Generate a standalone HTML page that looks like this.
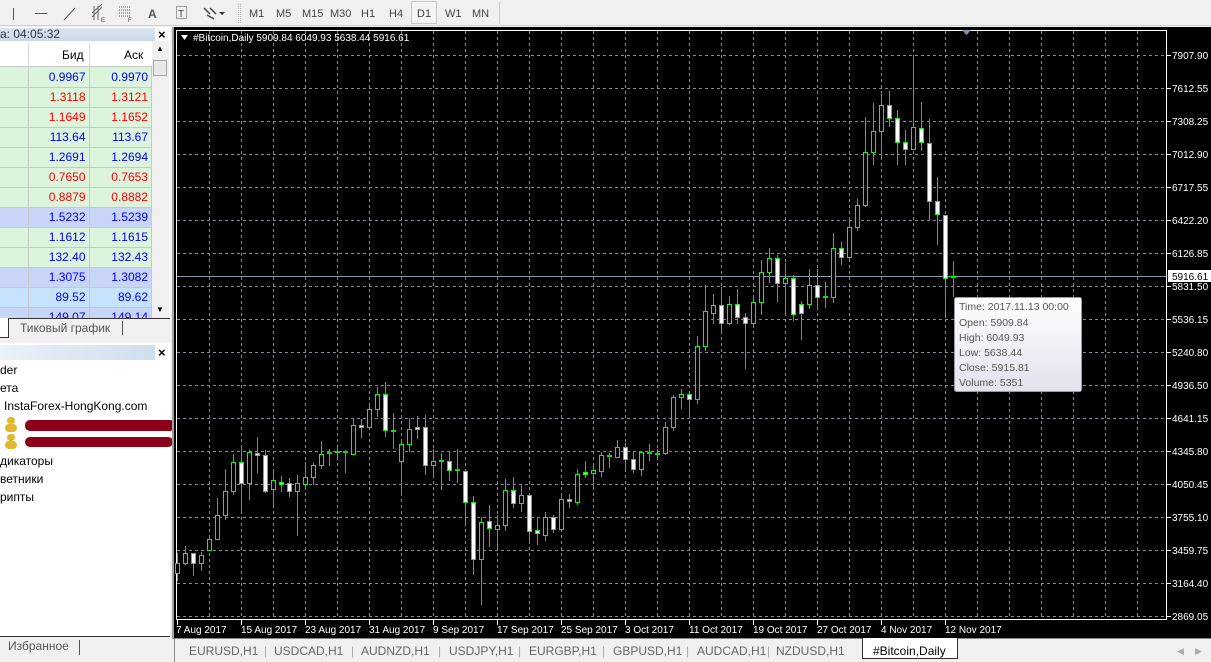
<!DOCTYPE html>
<html><head><meta charset="utf-8">
<style>
*{margin:0;padding:0;box-sizing:border-box}
body{width:1211px;height:662px;overflow:hidden;background:#f0f0f0;font-family:"Liberation Sans","DejaVu Sans",sans-serif;position:relative}
.abs{position:absolute}
.tb{font-size:11px;color:#333}
.mw td{height:20px;border-right:1px solid #c8c8c8;border-bottom:1px solid #c8c8c8;font-size:12px;text-align:right;padding-right:3px}
.bl{color:#0000ff}.rd{color:#ff0000}
.nav{font-size:12px;color:#000;position:absolute;left:0}
</style></head><body>
<div class="abs" style="left:0;top:0;width:1211px;height:26px;background:#f0f0f0;border-bottom:1px solid #d0d0d0"></div>
<svg class="abs" style="left:0;top:0" width="500" height="26">
<g stroke="#555" stroke-width="1" fill="none">
<path d="M13.5 8V20"/><path d="M35 13.5H47"/><path d="M64 20L75 8"/>
<path d="M92 17L102 7M92 13L102 4M94 20V6M98 20V6" stroke="#666"/>
<path d="M119 7H131M119 10H131M119 13H131M119 16H131" stroke-dasharray="1,1"/>
<rect x="176.5" y="6.5" width="10" height="12" stroke-dasharray="1,1"/>
<path d="M204 8L210 14M210 8L216 14M207 15L214 19" stroke="#444" stroke-width="1.5"/>
<path d="M238.5 4V23M240.5 4V23" stroke="#bbb" stroke-dasharray="1,1"/>
</g>
<text x="101" y="22" font-size="6" fill="#444">E</text>
<text x="128" y="22" font-size="6" fill="#444">F</text>
<text x="148" y="18" font-size="12" fill="#555" font-weight="bold">A</text>
<text x="178" y="17" font-size="10" fill="#444">T</text>
<path d="M219 12H225L222 15Z" fill="#333"/>
<rect x="411.5" y="1.5" width="25" height="22" fill="#f4f4f4" stroke="#c8c8c8"/>
<g font-size="11" fill="#444">
<text x="249" y="17">M1</text><text x="276" y="17">M5</text><text x="302" y="17">M15</text><text x="330" y="17">M30</text><text x="361" y="17">H1</text><text x="389" y="17">H4</text><text x="417" y="17">D1</text><text x="445" y="17">W1</text><text x="472" y="17">MN</text>
</g>
<path d="M499.5 2V24" stroke="#ccc"/>
</svg>

<div class="abs" style="left:0;top:27px;width:170px;height:311px;background:#fff"></div>
<div class="abs" style="left:0;top:28px;width:155px;height:13px;background:linear-gradient(#dbe6f1,#c9d9ea);font-size:12px;color:#333;line-height:13px">а: 04:05:32</div>
<div class="abs" style="left:158px;top:27px;font-size:13px;font-weight:bold">×</div>
<div class="abs" style="left:0;top:43px;width:152px;height:24px;background:#fff;border-bottom:1px solid #c8c8c8;font-size:12px">
<div class="abs" style="left:28px;top:0;width:1px;height:24px;background:#ddd"></div>
<div class="abs" style="left:89px;top:0;width:1px;height:24px;background:#ddd"></div>
<div class="abs" style="left:62px;top:5px">Бид</div><div class="abs" style="left:124px;top:5px">Аск</div></div>
<table class="abs mw" style="left:0;top:67px;width:152px;border-collapse:collapse">
<tr style="background:#dcf3dc"><td style="width:28px"></td><td class="bl" style="width:61px">0.9967</td><td class="bl">0.9970</td></tr>
<tr style="background:#dcf3dc"><td></td><td class="rd">1.3118</td><td class="rd">1.3121</td></tr>
<tr style="background:#dcf3dc"><td></td><td class="rd">1.1649</td><td class="rd">1.1652</td></tr>
<tr style="background:#dcf3dc"><td></td><td class="bl">113.64</td><td class="bl">113.67</td></tr>
<tr style="background:#dcf3dc"><td></td><td class="bl">1.2691</td><td class="bl">1.2694</td></tr>
<tr style="background:#dcf3dc"><td></td><td class="rd">0.7650</td><td class="rd">0.7653</td></tr>
<tr style="background:#dcf3dc"><td></td><td class="rd">0.8879</td><td class="rd">0.8882</td></tr>
<tr style="background:#c9d5f6"><td></td><td class="bl">1.5232</td><td class="bl">1.5239</td></tr>
<tr style="background:#dcf3dc"><td></td><td class="bl">1.1612</td><td class="bl">1.1615</td></tr>
<tr style="background:#dcf3dc"><td></td><td class="bl">132.40</td><td class="bl">132.43</td></tr>
<tr style="background:#c9d5f6"><td></td><td class="bl">1.3075</td><td class="bl">1.3082</td></tr>
<tr style="background:#c6e2fc"><td></td><td class="bl">89.52</td><td class="bl">89.62</td></tr>
<tr style="background:#c9d5f6"><td></td><td class="bl">149.07</td><td class="bl">149.14</td></tr>
</table>
<div class="abs" style="left:152px;top:41px;width:17px;height:277px;background:#f0f0f0"></div>
<div class="abs" style="left:153px;top:60px;width:14px;height:16px;background:#e8e8e8;border:1px solid #aaa"></div>
<div class="abs" style="left:156px;top:44px;font-size:8px">▲</div>
<div class="abs" style="left:156px;top:305px;font-size:8px">▼</div>
<div class="abs" style="left:0;top:318px;width:170px;height:20px;background:#f0f0f0;border-top:1px solid #333"></div>
<div class="abs" style="left:0;top:318px;width:9px;height:20px;background:#fff;border-right:1px solid #333;border-bottom:1px solid #333"></div>
<div class="abs" style="left:20px;top:321px;font-size:12px;color:#555">Тиковый график</div>
<div class="abs" style="left:122px;top:321px;width:1px;height:14px;background:#555"></div>

<div class="abs" style="left:0;top:343px;width:170px;height:294px;background:#fff"></div>
<div class="abs" style="left:0;top:345px;width:155px;height:15px;background:linear-gradient(90deg,#ebf1f8,#cfdeee)"></div>
<div class="abs" style="left:158px;top:345px;font-size:13px;font-weight:bold">×</div>
<div class="nav" style="top:363px">der</div>
<div class="nav" style="top:381px">ета</div>
<div class="nav" style="top:399px;left:4px">InstaForex-HongKong.com</div>
<div class="abs" style="left:7px;top:417px;width:8px;height:7px;background:#e0b830;border-radius:4px"></div>
<div class="abs" style="left:5px;top:424px;width:12px;height:8px;background:#e0b830;border-radius:4px"></div>
<div class="abs" style="left:7px;top:434px;width:8px;height:7px;background:#e0b830;border-radius:4px"></div>
<div class="abs" style="left:5px;top:441px;width:12px;height:8px;background:#e0b830;border-radius:4px"></div>
<div class="abs" style="left:25px;top:420px;width:150px;height:11px;background:#8b0018;border-radius:5px"></div>
<div class="abs" style="left:25px;top:437px;width:148px;height:10px;background:#8b0018;border-radius:5px"></div>
<div class="nav" style="top:454px">дикаторы</div>
<div class="nav" style="top:472px">ветники</div>
<div class="nav" style="top:490px">рипты</div>
<div class="abs" style="left:0;top:636px;width:170px;height:26px;background:#f0f0f0;border-top:1px solid #333"></div>
<div class="abs" style="left:8px;top:639px;font-size:12px;color:#555">Избранное</div>
<div class="abs" style="left:79px;top:640px;width:1px;height:15px;background:#555"></div>

<div class="abs" style="left:172px;top:27px;width:2px;height:612px;background:#a0a0a0"></div>
<svg class="abs" style="left:174px;top:27px" width="1037" height="611" viewBox="174 27 1037 611">
<rect x="174" y="27" width="1037" height="611" fill="#000"/>
<g stroke="#7f8b9c" stroke-dasharray="3,3" stroke-width="1">
<path d="M177 55.5H1166M177 88.5H1166M177 121.5H1166M177 154.5H1166M177 187.5H1166M177 220.5H1166M177 253.5H1166M177 286.5H1166M177 319.5H1166M177 352.5H1166M177 385.5H1166M177 418.5H1166M177 451.5H1166M177 484.5H1166M177 517.5H1166M177 550.5H1166M177 583.5H1166M177 616.5H1166"/>
<path d="M209.5 31V619M241.5 31V619M273.5 31V619M305.5 31V619M337.5 31V619M369.5 31V619M401.5 31V619M433.5 31V619M465.5 31V619M497.5 31V619M529.5 31V619M561.5 31V619M593.5 31V619M625.5 31V619M657.5 31V619M689.5 31V619M721.5 31V619M753.5 31V619M785.5 31V619M817.5 31V619M849.5 31V619M881.5 31V619M913.5 31V619M945.5 31V619M977.5 31V619M1009.5 31V619M1041.5 31V619M1073.5 31V619M1105.5 31V619M1137.5 31V619"/>
</g>
<path d="M177 276.5H1166" stroke="#8494a8"/>
<rect x="176.5" y="30.5" width="990" height="589" fill="none" stroke="#fff"/>
<path d="M962 30H971L966.5 35Z" fill="#8a96a8"/>
<path d="M181 35H188L184.5 40Z" fill="#fff"/>
<text x="193" y="41" font-size="10" fill="#fff">#Bitcoin,Daily  5909.84 6049.93 5638.44 5916.61</text>
<g stroke="#00e600" stroke-width="1" fill="none">
<path d="M177.5 553V581M185.5 546V565M193.5 553V576M201.5 552V571M209.5 537V550M217.5 498V540M225.5 469V520M233.5 454V495M241.5 445V514M249.5 450V500M257.5 437V473M265.5 450V493M273.5 470V505M281.5 476V492M289.5 478V497M297.5 475V536M305.5 462V489M313.5 463V485M321.5 441V469M329.5 449V466M337.5 447V459M345.5 450V473M353.5 418V454M361.5 419V438M369.5 405V429M377.5 387V417M385.5 382V437M393.5 413V449M401.5 441V493M409.5 418V452M417.5 416V439M425.5 415V475M433.5 449V478M441.5 453V490M449.5 451V481M457.5 449V483M465.5 470V523M473.5 496V575M481.5 517V605M489.5 505V547M497.5 515V550M505.5 479V531M513.5 477V508M521.5 485V512M529.5 495V542M537.5 517V545M545.5 512V541M553.5 515V533M561.5 494V530M569.5 494V508M577.5 469V505M585.5 461V478M593.5 465V489M601.5 452V477M609.5 453V468M617.5 440V457M625.5 443V469M633.5 452V473M641.5 451V476M649.5 444V461M657.5 449V459M665.5 422V455M673.5 395V431M681.5 389V409M689.5 394V415M697.5 336V404M705.5 285V351M713.5 294V324M721.5 287V333M729.5 296V325M737.5 289V324M745.5 313V369M753.5 297V327M761.5 260V315M769.5 248V283M777.5 255V302M785.5 263V313M793.5 275V321M801.5 301V340M809.5 269V309M817.5 269V307M825.5 282V308M833.5 233V303M841.5 242V265M849.5 221V261M857.5 199V231M865.5 117V207M873.5 103V165M881.5 93V157M889.5 91V127M897.5 110V165M905.5 130V165M913.5 58V150M921.5 102V151M929.5 119V221M937.5 177V245M945.5 215V318M953.5 261V297"/>
<path stroke-width="2" d="M327 453H332M335 452H340M343 452H348M391 431H396M439 461H444M455 470H460M607 456H612M647 453H652M655 454H660M823 297H828M951 277H956"/>
</g>
<g stroke="#00ff00" stroke-width="1" fill="#000">
<rect x="175.5" y="563.5" width="4" height="10"/><rect x="183.5" y="553.5" width="4" height="10"/><rect x="199.5" y="555.5" width="4" height="8"/><rect x="207.5" y="539.5" width="4" height="11"/><rect x="215.5" y="515.5" width="4" height="24"/><rect x="223.5" y="491.5" width="4" height="24"/><rect x="231.5" y="462.5" width="4" height="29"/><rect x="247.5" y="452.5" width="4" height="31"/><rect x="271.5" y="480.5" width="4" height="9"/><rect x="295.5" y="483.5" width="4" height="8"/><rect x="303.5" y="477.5" width="4" height="7"/><rect x="311.5" y="465.5" width="4" height="12"/><rect x="319.5" y="454.5" width="4" height="11"/><rect x="351.5" y="425.5" width="4" height="29"/><rect x="367.5" y="409.5" width="4" height="18"/><rect x="375.5" y="394.5" width="4" height="15"/><rect x="399.5" y="444.5" width="4" height="17"/><rect x="407.5" y="429.5" width="4" height="15"/><rect x="431.5" y="461.5" width="4" height="4"/><rect x="479.5" y="522.5" width="4" height="37"/><rect x="495.5" y="525.5" width="4" height="4"/><rect x="503.5" y="490.5" width="4" height="35"/><rect x="519.5" y="495.5" width="4" height="8"/><rect x="543.5" y="517.5" width="4" height="18"/><rect x="559.5" y="499.5" width="4" height="30"/><rect x="575.5" y="474.5" width="4" height="28"/><rect x="591.5" y="470.5" width="4" height="3"/><rect x="599.5" y="455.5" width="4" height="16"/><rect x="615.5" y="447.5" width="4" height="10"/><rect x="639.5" y="452.5" width="4" height="17"/><rect x="663.5" y="427.5" width="4" height="26"/><rect x="671.5" y="397.5" width="4" height="30"/><rect x="679.5" y="394.5" width="4" height="3"/><rect x="695.5" y="346.5" width="4" height="53"/><rect x="703.5" y="311.5" width="4" height="35"/><rect x="711.5" y="305.5" width="4" height="8"/><rect x="727.5" y="304.5" width="4" height="19"/><rect x="751.5" y="302.5" width="4" height="21"/><rect x="759.5" y="272.5" width="4" height="30"/><rect x="767.5" y="258.5" width="4" height="14"/><rect x="783.5" y="278.5" width="4" height="5"/><rect x="807.5" y="285.5" width="4" height="19"/><rect x="831.5" y="248.5" width="4" height="49"/><rect x="847.5" y="227.5" width="4" height="30"/><rect x="855.5" y="205.5" width="4" height="22"/><rect x="863.5" y="152.5" width="4" height="53"/><rect x="871.5" y="131.5" width="4" height="21"/><rect x="879.5" y="105.5" width="4" height="26"/><rect x="911.5" y="127.5" width="4" height="22"/>
</g>
<g stroke="#00ff00" stroke-width="1" fill="#fff">
<rect x="191.5" y="553.5" width="4" height="10"/><rect x="239.5" y="462.5" width="4" height="21"/><rect x="255.5" y="453.5" width="4" height="2"/><rect x="263.5" y="455.5" width="4" height="36"/><rect x="279.5" y="482.5" width="4" height="2"/><rect x="287.5" y="483.5" width="4" height="8"/><rect x="359.5" y="425.5" width="4" height="2"/><rect x="383.5" y="394.5" width="4" height="36"/><rect x="415.5" y="427.5" width="4" height="2"/><rect x="423.5" y="427.5" width="4" height="38"/><rect x="447.5" y="461.5" width="4" height="9"/><rect x="463.5" y="471.5" width="4" height="31"/><rect x="471.5" y="502.5" width="4" height="57"/><rect x="487.5" y="521.5" width="4" height="7"/><rect x="511.5" y="490.5" width="4" height="13"/><rect x="527.5" y="495.5" width="4" height="36"/><rect x="535.5" y="530.5" width="4" height="3"/><rect x="551.5" y="517.5" width="4" height="12"/><rect x="567.5" y="499.5" width="4" height="2"/><rect x="583.5" y="472.5" width="4" height="2"/><rect x="623.5" y="447.5" width="4" height="12"/><rect x="631.5" y="459.5" width="4" height="10"/><rect x="687.5" y="394.5" width="4" height="5"/><rect x="719.5" y="305.5" width="4" height="18"/><rect x="735.5" y="304.5" width="4" height="13"/><rect x="743.5" y="317.5" width="4" height="6"/><rect x="775.5" y="258.5" width="4" height="25"/><rect x="791.5" y="278.5" width="4" height="36"/><rect x="799.5" y="304.5" width="4" height="9"/><rect x="815.5" y="285.5" width="4" height="12"/><rect x="839.5" y="248.5" width="4" height="9"/><rect x="887.5" y="105.5" width="4" height="13"/><rect x="895.5" y="118.5" width="4" height="24"/><rect x="903.5" y="142.5" width="4" height="7"/><rect x="919.5" y="128.5" width="4" height="14"/><rect x="927.5" y="143.5" width="4" height="58"/><rect x="935.5" y="201.5" width="4" height="13"/><rect x="943.5" y="215.5" width="4" height="63"/>
</g>
<path d="M949 276.5H958" stroke="#00ff00"/>
<g stroke="#fff"><path d="M1167 55.5H1171M1167 88.5H1171M1167 121.5H1171M1167 154.5H1171M1167 187.5H1171M1167 220.5H1171M1167 253.5H1171M1167 286.5H1171M1167 319.5H1171M1167 352.5H1171M1167 385.5H1171M1167 418.5H1171M1167 451.5H1171M1167 484.5H1171M1167 517.5H1171M1167 550.5H1171M1167 583.5H1171M1167 616.5H1171"/>
<path d="M177.5 620V625M241.5 620V625M305.5 620V625M369.5 620V625M433.5 620V625M497.5 620V625M561.5 620V625M625.5 620V625M689.5 620V625M753.5 620V625M817.5 620V625M881.5 620V625M945.5 620V625"/></g>
<g font-size="10" fill="#fff">
<text x="1172" y="59">7907.90</text><text x="1172" y="92">7612.55</text><text x="1172" y="125">7308.25</text><text x="1172" y="158">7012.90</text><text x="1172" y="191">6717.55</text><text x="1172" y="224">6422.20</text><text x="1172" y="257">6126.85</text><text x="1172" y="290">5831.50</text><text x="1172" y="323">5536.15</text><text x="1172" y="356">5240.80</text><text x="1172" y="389">4936.50</text><text x="1172" y="422">4641.15</text><text x="1172" y="455">4345.80</text><text x="1172" y="488">4050.45</text><text x="1172" y="521">3755.10</text><text x="1172" y="554">3459.75</text><text x="1172" y="587">3164.40</text><text x="1172" y="620">2869.05</text>
<text x="176" y="633">7 Aug 2017</text><text x="241" y="633">15 Aug 2017</text><text x="305" y="633">23 Aug 2017</text><text x="369" y="633">31 Aug 2017</text><text x="433" y="633">9 Sep 2017</text><text x="497" y="633">17 Sep 2017</text><text x="561" y="633">25 Sep 2017</text><text x="625" y="633">3 Oct 2017</text><text x="689" y="633">11 Oct 2017</text><text x="753" y="633">19 Oct 2017</text><text x="817" y="633">27 Oct 2017</text><text x="881" y="633">4 Nov 2017</text><text x="945" y="633">12 Nov 2017</text>
</g>
<rect x="1168" y="270" width="43" height="12" fill="#fff"/>
<text x="1172" y="280" font-size="10" fill="#000">5916.61</text>
<defs><linearGradient id="tg" x1="0" y1="0" x2="0" y2="1"><stop offset="0" stop-color="#ffffff"/><stop offset="1" stop-color="#e2e2ee"/></linearGradient></defs>
<rect x="954.5" y="297.5" width="127" height="94" rx="2" fill="url(#tg)" stroke="#9a9aa8"/>
<g font-size="10.5" fill="#555">
<text x="959" y="310">Time: 2017.11.13 00:00</text><text x="959" y="326">Open: 5909.84</text><text x="959" y="341">High: 6049.93</text><text x="959" y="356">Low:  5638.44</text><text x="959" y="371">Close: 5915.81</text><text x="959" y="386">Volume: 5351</text>
</g>
</svg>

<div class="abs" style="left:172px;top:638px;width:1039px;height:24px;background:#f0f0f0;border-top:1px solid #888"></div>
<div class="abs" style="left:174px;top:638px;width:1px;height:24px;background:#888"></div>
<div class="abs" style="left:862px;top:638px;width:96px;height:21px;background:#fff;border:1px solid #333;border-top:none"></div>
<div class="abs tb" style="left:0;top:644px;font-size:12px;color:#666;width:1211px;height:16px">
<span class="abs" style="left:189px">EURUSD,H1</span><span class="abs" style="left:264px;color:#aaa">|</span>
<span class="abs" style="left:274px">USDCAD,H1</span><span class="abs" style="left:351px;color:#aaa">|</span>
<span class="abs" style="left:361px">AUDNZD,H1</span><span class="abs" style="left:438px;color:#aaa">|</span>
<span class="abs" style="left:449px">USDJPY,H1</span><span class="abs" style="left:518px;color:#aaa">|</span>
<span class="abs" style="left:529px">EURGBP,H1</span><span class="abs" style="left:602px;color:#aaa">|</span>
<span class="abs" style="left:613px">GBPUSD,H1</span><span class="abs" style="left:686px;color:#aaa">|</span>
<span class="abs" style="left:697px">AUDCAD,H1</span><span class="abs" style="left:767px;color:#aaa">|</span>
<span class="abs" style="left:776px">NZDUSD,H1</span>
<span class="abs" style="left:873px;color:#000">#Bitcoin,Daily</span>
<span class="abs" style="left:1177px;font-size:9px;color:#aaa;top:2px">◀</span><span class="abs" style="left:1195px;font-size:9px;color:#aaa;top:2px">▶</span>
</div>
</body></html>
